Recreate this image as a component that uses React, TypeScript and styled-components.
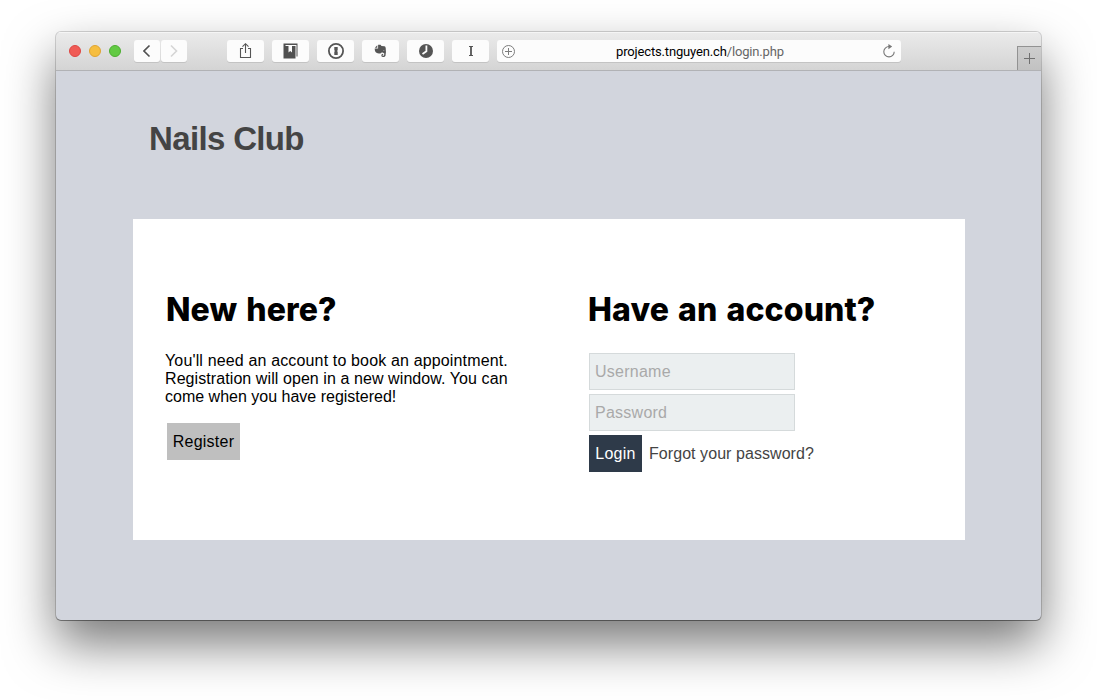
import React from 'react';
import styled, { createGlobalStyle } from 'styled-components';

const GlobalStyle = createGlobalStyle`
  *, *::before, *::after { box-sizing: border-box; }
  body { margin: 0; background: #fff; font-family: 'Liberation Sans', Arial, sans-serif; }
`;

const Desktop = styled.div`
  height: 700px;
  padding: 32px 56px 80px;
  overflow: hidden;
`;

const Window = styled.div`
  width: 985px;
  height: 588px;
  border-radius: 5px;
  background: #d2d5dd;
  overflow: hidden;
  display: flex;
  flex-direction: column;
  box-shadow: 0 0 0 1px rgba(0, 0, 0, 0.16), 0 1px 0 rgba(0, 0, 0, 0.3), 0 24px 50px rgba(0, 0, 0, 0.53);
`;

const Toolbar = styled.header`
  height: 39px;
  flex: none;
  display: flex;
  align-items: flex-start;
  padding: 8px 0 0 13px;
  background: linear-gradient(#ebebeb, #d4d4d4);
  border-bottom: 1px solid #b1b2b5;
  box-shadow: inset 0 1px 0 #f5f5f5;
`;

const Lights = styled.div`
  display: flex;
  gap: 8px;
  margin: 5px 13px 0 0;
`;

const Light = styled.span<{ $fill: string; $edge: string }>`
  width: 12px;
  height: 12px;
  border-radius: 50%;
  background: ${(p) => p.$fill};
  border: 1px solid ${(p) => p.$edge};
`;

const ToolButton = styled.button<{ $width?: number }>`
  width: ${(p) => p.$width ?? 37}px;
  height: 22px;
  padding: 0;
  border: 0;
  border-radius: 3px;
  background: #fcfcfc;
  box-shadow: 0 1px 0 #c3c3c3;
  display: flex;
  align-items: center;
  justify-content: center;
  svg { display: block; }
`;

const NavGroup = styled.div`
  display: flex;
  gap: 1px;
  margin-right: 40px;
`;

const Extensions = styled.div`
  display: flex;
  gap: 8px;
  margin-right: 8px;
`;

const AddressBar = styled.div`
  width: 404px;
  height: 22px;
  padding: 0 5px;
  border-radius: 3px;
  background: #fcfcfc;
  box-shadow: 0 1px 0 #c3c3c3;
  display: flex;
  align-items: center;
  justify-content: space-between;
`;

const Url = styled.span`
  padding: 2px 0 0 3px;
  font: 13px/20px Roboto, sans-serif;
  letter-spacing: -0.16px;
  color: #000;
  span { color: #666; }
`;

const NewTab = styled.button`
  width: 24px;
  height: 24px;
  margin: 6px 0 0 auto;
  padding: 0;
  border: 1px solid #929292;
  border-width: 1px 0 0 1px;
  background: linear-gradient(#cdcdcd, #c2c2c2);
  display: flex;
  align-items: center;
  justify-content: center;
`;

const Page = styled.div`
  flex: 1;
  padding: 49px 76px 80px 77px;
`;

const SiteTitle = styled.h1`
  margin: 0 0 61px 16px;
  font-size: 33px;
  line-height: 38px;
  letter-spacing: -0.65px;
  color: #444;
`;

const Card = styled.main`
  height: 321px;
  padding: 71px 32px 0;
  background: #fff;
  display: grid;
  grid-template-columns: 422px 1fr;
`;

const Heading = styled.h2`
  margin: 0 0 22px;
  padding-left: 1px;
  font: 800 32px/40px Inter, sans-serif;
  letter-spacing: 0.1px;
  word-spacing: 2px;
  color: #000;
  white-space: nowrap;
`;

const Intro = styled.p`
  margin: 0 0 17px;
  font-size: 16px;
  line-height: 18px;
  color: #000;
  white-space: nowrap;
`;

const IntroLine = styled.span<{ $tracking: number }>`
  display: block;
  letter-spacing: ${(p) => p.$tracking}px;
`;

const Form = styled.div`
  padding: 1px 0 0 2px;
  display: flex;
  flex-direction: column;
  align-items: flex-start;
  gap: 4px;
`;

const Field = styled.input`
  width: 206px;
  height: 37px;
  padding: 0 5px;
  border: 1px solid #d5dadb;
  border-radius: 0;
  background: #ebeff0;
  font: 16px 'Liberation Sans', Arial, sans-serif;
  letter-spacing: 0.25px;
  &::placeholder { color: #a9a9a9; opacity: 1; }
`;

const ActionRow = styled.div`
  display: flex;
  align-items: center;
  gap: 7px;
`;

const Action = styled.button<{ $primary?: boolean }>`
  width: ${(p) => (p.$primary ? 53 : 73)}px;
  height: 37px;
  margin-left: ${(p) => (p.$primary ? 0 : 2)}px;
  padding: 0;
  border: 0;
  background: ${(p) => (p.$primary ? '#2e3a49' : '#bfbfbf')};
  color: ${(p) => (p.$primary ? '#fff' : '#000')};
  font: 16px 'Liberation Sans', Arial, sans-serif;
  letter-spacing: 0.25px;
`;

const Forgot = styled.a`
  font-size: 16px;
  letter-spacing: 0.06px;
  color: #444;
  white-space: nowrap;
`;

const Chevron = ({ flip, color }: { flip?: boolean; color: string }) => (
  <svg width="8" height="14" viewBox="0 0 8 14" fill="none" stroke={color} strokeWidth="1.6">
    <path d={flip ? 'M1 1.5L6.5 7L1 12.5' : 'M6.5 1.5L1 7L6.5 12.5'} />
  </svg>
);

const ShareIcon = () => (
  <svg width="15" height="18" viewBox="0 0 15 18" fill="none" stroke="#555" strokeWidth="1.1">
    <path d="M5 6.5H2.5V15.5H12.5V6.5H10M7.5 11V2M4.5 4.7L7.5 1.7L10.5 4.7" />
  </svg>
);

const BookmarkIcon = () => (
  <svg width="17" height="18" viewBox="0 0 17 18">
    <path d="M1.5 1.5V16.5H13.5V4H10V10.5L8.2 9L6.5 10.5V4H3.5V3H14.5V14.5H15.5V1.5Z" fill="#505050" />
  </svg>
);

const KeyholeIcon = () => (
  <svg width="18" height="18" viewBox="0 0 18 18">
    <circle cx="9" cy="9" r="7.1" fill="none" stroke="#555" strokeWidth="1.8" />
    <path d="M7.3 5H10.7V8.2L10 9L10.7 9.8V13H7.3V9.8L8 9L7.3 8.2Z" fill="#555" />
  </svg>
);

const ElephantIcon = () => (
  <svg width="13" height="14" viewBox="0.5 0 13 14" fill="#555">
    <path d="M4.6 .8H7L8 2L11 2.3Q12 2.5 12.2 4Q12.8 8 12 11.7Q11.5 13.2 9.7 13.1Q7.8 13 7.8 11.2Q7.8 9.6 9.7 9.7V10.8Q8.9 10.8 9 11.4Q9.2 12 10.1 11.8Q11 11.4 10.7 9.2Q9.5 8.7 8.4 8.3Q7.5 10 5.4 9.5Q3 9.4 2 8Q1.1 6.2 1.2 4.5H4.6Z" />
    <path d="M3.8 1.2V3.8H1.3Z" />
    <path d="M9.5 6.3Q10.4 5.6 11.1 6.7Z" fill="#fcfcfc" />
  </svg>
);

const ClockIcon = () => (
  <svg width="16" height="16" viewBox="0 0 16 16">
    <circle cx="8" cy="8" r="7" fill="#555" />
    <path d="M8.4 2.5V8.3L4.5 11" fill="none" stroke="#fcfcfc" strokeWidth="1.8" />
  </svg>
);

const CursorIcon = () => (
  <svg width="8" height="12" viewBox="0 0 8 12" fill="none" stroke="#555">
    <path d="M2 1.5H6M2 10.5H6" />
    <path d="M4 1V11" strokeWidth="1.8" />
  </svg>
);

const AddIcon = () => (
  <svg width="13" height="13" viewBox="0 0 13 13" fill="none" stroke="#7c7c7c">
    <circle cx="6.5" cy="6.5" r="6" />
    <path d="M6.5 3V10M3 6.5H10" />
  </svg>
);

const ReloadIcon = () => (
  <svg width="14" height="14" viewBox="0 0 14 14">
    <path d="M7 2.5A5.2 5.2 0 1 0 12.2 7.7" fill="none" stroke="#777" strokeWidth="1.1" />
    <path d="M6.4 0L10.2 2.6L6.4 5.2Z" fill="#777" />
  </svg>
);

const extensions = [ShareIcon, BookmarkIcon, KeyholeIcon, ElephantIcon, ClockIcon, CursorIcon];

export default function App() {
  return (
    <Desktop>
      <GlobalStyle />
      <Window>
        <Toolbar>
          <Lights>
            <Light $fill="#f05b56" $edge="#de4643" />
            <Light $fill="#f6be40" $edge="#e0a431" />
            <Light $fill="#62ca43" $edge="#4cae30" />
          </Lights>
          <NavGroup>
            <ToolButton $width={26}><Chevron color="#505050" /></ToolButton>
            <ToolButton $width={26}><Chevron flip color="#d5d5d5" /></ToolButton>
          </NavGroup>
          <Extensions>
            {extensions.map((Icon, i) => (
              <ToolButton key={i}><Icon /></ToolButton>
            ))}
          </Extensions>
          <AddressBar>
            <AddIcon />
            <Url>projects.tnguyen.ch<span>/login.php</span></Url>
            <ReloadIcon />
          </AddressBar>
          <NewTab>
            <svg width="11" height="11" viewBox="0 0 11 11" stroke="#707070">
              <path d="M5.5 0V11M0 5.5H11" />
            </svg>
          </NewTab>
        </Toolbar>
        <Page>
          <SiteTitle>Nails Club</SiteTitle>
          <Card>
            <section>
              <Heading>New here?</Heading>
              <Intro>
                <IntroLine $tracking={0.15}>You'll need an account to book an appointment.</IntroLine>
                <IntroLine $tracking={0.08}>Registration will open in a new window. You can</IntroLine>
                <IntroLine $tracking={0}>come when you have registered!</IntroLine>
              </Intro>
              <Action>Register</Action>
            </section>
            <section>
              <Heading>Have an account?</Heading>
              <Form>
                <Field placeholder="Username" />
                <Field type="password" placeholder="Password" />
                <ActionRow>
                  <Action $primary>Login</Action>
                  <Forgot>Forgot your password?</Forgot>
                </ActionRow>
              </Form>
            </section>
          </Card>
        </Page>
      </Window>
    </Desktop>
  );
}
